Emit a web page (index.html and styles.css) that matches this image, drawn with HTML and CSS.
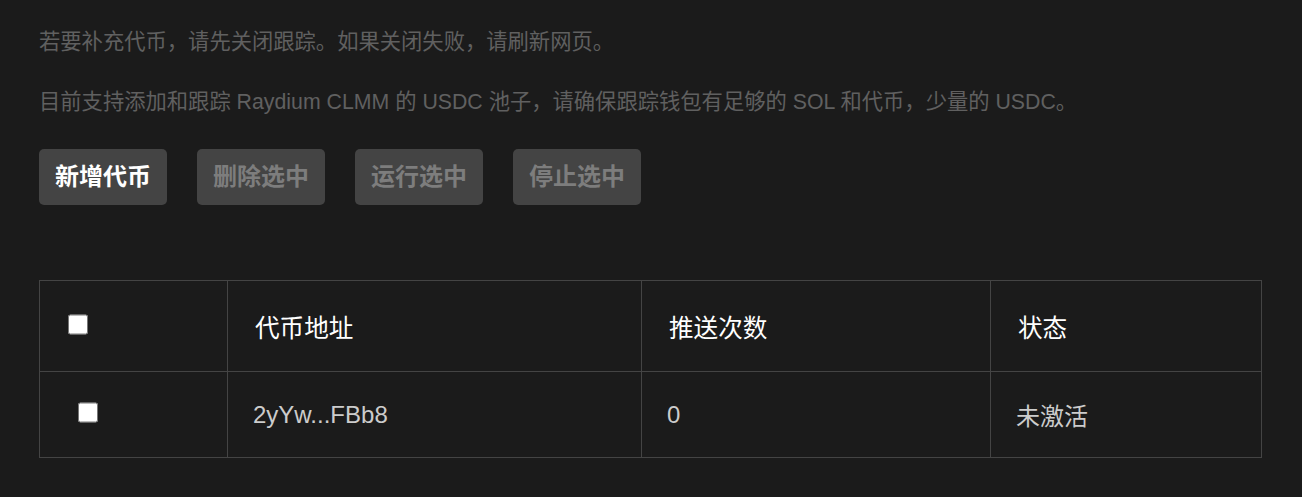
FILE: index.html
```html
<!DOCTYPE html>
<html lang="zh-CN">
<head>
<meta charset="utf-8">
<title>代币跟踪</title>
<link rel="stylesheet" href="styles.css">
</head>
<body>
<div class="page">
  <p class="note">若要补充代币，请先关闭跟踪。如果关闭失败，请刷新网页。</p>
  <p class="note">目前支持添加和跟踪 Raydium CLMM 的 USDC 池子，请确保跟踪钱包有足够的 SOL 和代币，少量的 USDC。</p>
  <div class="actions">
    <button class="btn btn-primary">新增代币</button>
    <button class="btn" disabled>删除选中</button>
    <button class="btn" disabled>运行选中</button>
    <button class="btn" disabled>停止选中</button>
  </div>
  <table class="tokens">
    <colgroup>
      <col class="c1"><col class="c2"><col class="c3"><col class="c4">
    </colgroup>
    <thead>
      <tr>
        <th class="check-head"><input type="checkbox" class="cb"></th>
        <th>代币地址</th>
        <th>推送次数</th>
        <th>状态</th>
      </tr>
    </thead>
    <tbody>
      <tr>
        <td class="check-cell"><input type="checkbox" class="cb"></td>
        <td>2yYw...FBb8</td>
        <td>0</td>
        <td>未激活</td>
      </tr>
    </tbody>
  </table>
</div>
</body>
</html>
```
FILE: styles.css
```css
html, body {
  margin: 0;
  padding: 0;
  background: #1b1b1b;
}
body {
  font-family: "Liberation Sans", Arial, "Noto Sans CJK SC", sans-serif;
  color: #ccc;
}
.page {
  padding: 26px 41px 0 39px;
}
.note {
  margin: 0 0 28px;
  font-size: 21.3px;
  line-height: 32px;
  color: #606060;
}
.note + .note {
  margin-bottom: 31px;
}
.actions {
  display: flex;
  gap: 30px;
  margin-bottom: 75px;
}
.btn {
  width: 128px;
  height: 56px;
  border: none;
  border-radius: 5px;
  background: #444;
  color: #7d7d7d;
  font-family: "Liberation Sans", Arial, "Noto Sans CJK SC", sans-serif;
  font-size: 24px;
  font-weight: bold;
  padding: 0 0 6px;
}
.btn-primary {
  color: #fff;
}
.tokens {
  width: 1222px;
  border-collapse: collapse;
  table-layout: fixed;
  font-size: 24px;
}
.c1 { width: 188px; }
.c2 { width: 414px; }
.c3 { width: 349px; }
.c4 { width: 271px; }
.tokens th, .tokens td {
  border: 1px solid #444;
  text-align: left;
  padding: 0 0 0 27px;
}
.tokens th {
  height: 90px;
  font-weight: normal;
  font-size: 24.6px;
  color: #fff;
}
.tokens td {
  height: 85px;
  color: #ccc;
  padding-left: 25px;
}
.tokens th.check-head {
  padding-left: 28px;
}
.tokens td.check-cell {
  padding-left: 38px;
}
.cb {
  width: 20px;
  height: 21px;
  margin: 0 0 6px;
  vertical-align: middle;
}
```
